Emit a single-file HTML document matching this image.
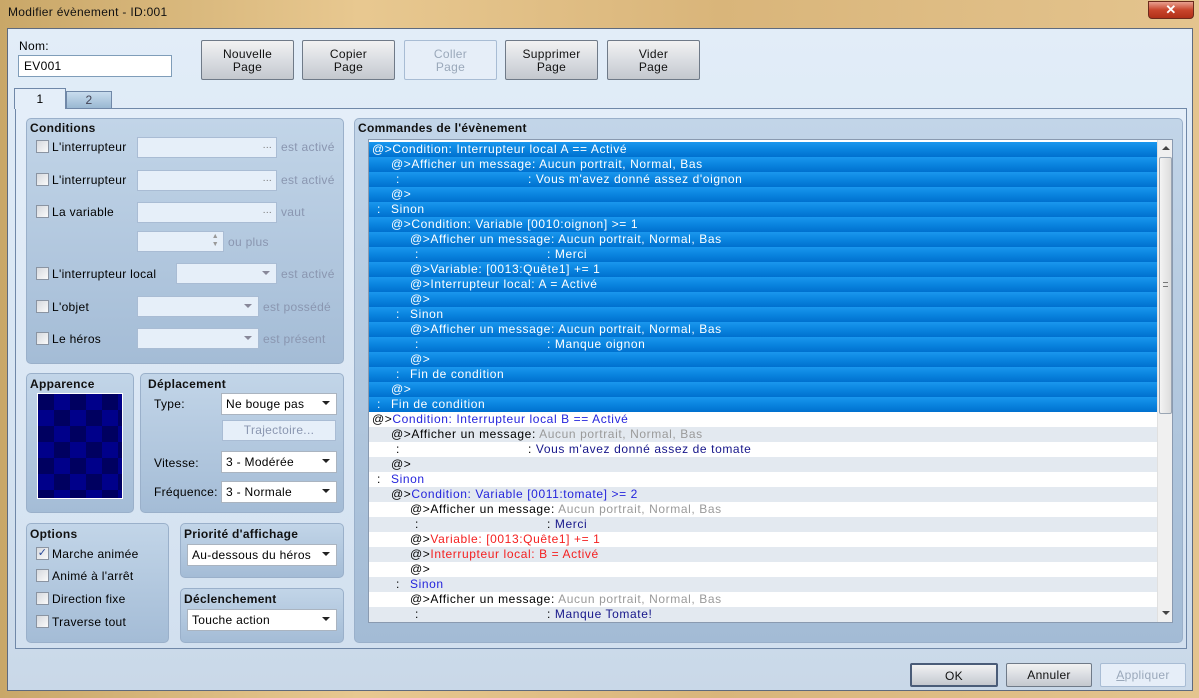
<!DOCTYPE html>
<html><head><meta charset="utf-8"><style>
*{box-sizing:border-box;margin:0;padding:0}
body{width:1199px;height:698px;overflow:hidden;position:relative;font-family:"Liberation Sans",sans-serif;font-size:12px;letter-spacing:0.3px;color:#000;background:linear-gradient(90deg,#c9a768,#e8c890 30%,#d9b57a 60%,#e4c48e);}
.a{position:absolute}
.title{left:8px;top:5px;font-size:12px;color:#111}
.close{left:1148px;top:1px;width:46px;height:18px;border:1px solid #6b2a1c;border-radius:0 0 4px 4px;background:linear-gradient(#e8a090,#c8452c 50%,#b03018);color:#fff;text-align:center;font-weight:bold;font-size:13px;line-height:16px}
.body{left:7px;top:28px;width:1186px;height:663px;border:1px solid #5e6a7e;background:linear-gradient(#e2edf8,#d6e4f2 60%,#c9d8e8)}
.btn{border:1px solid #6f7a88;border-radius:2px;background:linear-gradient(#f2f2f2,#dadde2 50%,#c4c8ce);text-align:center;font-size:12px;line-height:13px;color:#111}
.btn.dis{border-color:#a8bcd4;background:#e6eef8;color:#9aa8ba}
.inp{background:#fff;border:1px solid #7f9db9}
.panel{border:1px solid #9ab0ca;border-radius:5px;background:linear-gradient(#c2d5e8,#a4bcd6)}
.hd{font-weight:bold;font-size:12px;color:#111}
.cb{width:13px;height:13px;border:1px solid #8a94a2;background:linear-gradient(135deg,#d6d9de,#fafafa)}
.fld{border:1px solid #a9bcd4;background:#e6eff9}
.gray{color:#8a96b0}
.sel{background:#fff;border:1px solid #aab4c0}
.arr{position:absolute;right:6px;top:7px;width:0;height:0;border-left:4px solid transparent;border-right:4px solid transparent;border-top:4px solid #222}
.row{position:absolute;left:0;width:788px;height:15px;line-height:15px;white-space:nowrap;letter-spacing:0.6px}
.s{background:linear-gradient(#1a97ee,#0a84df 50%,#0070cf);color:#fff}
.w{background:#fff}
.g{background:#e3e9f0}
.row span{position:absolute;top:0}
.b{color:#2424dc}.n{color:#16168a}.r{color:#f42020}.gr{color:#9a9a9a}
i{font-style:normal}
</style></head><body>
<div class="a title">Modifier évènement - ID:001</div>
<div class="a close">✕</div>
<div class="a body"></div>

<div class="a" style="left:19px;top:39px">Nom:</div>
<div class="a inp" style="left:18px;top:55px;width:154px;height:22px;padding:3px 5px">EV001</div>
<div class="a btn" style="left:201px;top:40px;width:93px;height:40px;padding-top:7px">Nouvelle<br>Page</div>
<div class="a btn" style="left:302px;top:40px;width:93px;height:40px;padding-top:7px">Copier<br>Page</div>
<div class="a btn dis" style="left:404px;top:40px;width:93px;height:40px;padding-top:7px">Coller<br>Page</div>
<div class="a btn" style="left:505px;top:40px;width:93px;height:40px;padding-top:7px">Supprimer<br>Page</div>
<div class="a btn" style="left:607px;top:40px;width:93px;height:40px;padding-top:7px">Vider<br>Page</div>

<div class="a" style="left:15px;top:108px;width:1172px;height:541px;border:1px solid #7088a8;background:linear-gradient(#e4eef9,#d2e0ef)"></div>
<div class="a" style="left:14px;top:88px;width:52px;height:21px;border:1px solid #7088a8;border-bottom:none;background:#e4eef9;text-align:center;line-height:20px">1</div>
<div class="a" style="left:66px;top:91px;width:46px;height:17px;border:1px solid #7088a8;border-bottom:none;background:linear-gradient(#c8dcee,#9ab8d2);text-align:center;line-height:16px;color:#445">2</div>

<!-- Conditions -->
<div class="a panel" style="left:26px;top:118px;width:318px;height:246px"></div>
<div class="a hd" style="left:30px;top:121px">Conditions</div>
<div class="a cb" style="left:36px;top:140px"></div><div class="a" style="left:52px;top:140px">L'interrupteur</div>
<div class="a fld" style="left:137px;top:137px;width:140px;height:21px"><span style="position:absolute;right:4px;top:2px;color:#777;font-size:10px">...</span></div><div class="a gray" style="left:281px;top:140px">est activé</div>
<div class="a cb" style="left:36px;top:173px"></div><div class="a" style="left:52px;top:173px">L'interrupteur</div>
<div class="a fld" style="left:137px;top:170px;width:140px;height:21px"><span style="position:absolute;right:4px;top:2px;color:#777;font-size:10px">...</span></div><div class="a gray" style="left:281px;top:173px">est activé</div>
<div class="a cb" style="left:36px;top:205px"></div><div class="a" style="left:52px;top:205px">La variable</div>
<div class="a fld" style="left:137px;top:202px;width:140px;height:21px"><span style="position:absolute;right:4px;top:2px;color:#777;font-size:10px">...</span></div><div class="a gray" style="left:281px;top:205px">vaut</div>
<div class="a fld" style="left:137px;top:231px;width:87px;height:21px"><span style="position:absolute;right:4px;top:1px;color:#999;font-size:7px;line-height:8px">▲<br>▼</span></div><div class="a gray" style="left:228px;top:235px">ou plus</div>
<div class="a cb" style="left:36px;top:267px"></div><div class="a" style="left:52px;top:267px">L'interrupteur local</div>
<div class="a fld" style="left:176px;top:263px;width:101px;height:21px"><div class="arr" style="border-top-color:#889"></div></div><div class="a gray" style="left:281px;top:267px">est activé</div>
<div class="a cb" style="left:36px;top:300px"></div><div class="a" style="left:52px;top:300px">L'objet</div>
<div class="a fld" style="left:137px;top:296px;width:122px;height:21px"><div class="arr" style="border-top-color:#889"></div></div><div class="a gray" style="left:263px;top:300px">est possédé</div>
<div class="a cb" style="left:36px;top:332px"></div><div class="a" style="left:52px;top:332px">Le héros</div>
<div class="a fld" style="left:137px;top:328px;width:122px;height:21px"><div class="arr" style="border-top-color:#889"></div></div><div class="a gray" style="left:263px;top:332px">est présent</div>

<!-- Apparence -->
<div class="a panel" style="left:26px;top:373px;width:108px;height:140px"></div>
<div class="a hd" style="left:30px;top:377px">Apparence</div>
<div class="a" style="left:37px;top:393px;width:86px;height:106px;border:1px solid #fff;background-color:#000060;background-image:linear-gradient(45deg,#00008a 25%,transparent 25%,transparent 75%,#00008a 75%),linear-gradient(45deg,#00008a 25%,transparent 25%,transparent 75%,#00008a 75%);background-size:32px 32px;background-position:0 0,16px 16px"></div>

<!-- Deplacement -->
<div class="a panel" style="left:140px;top:373px;width:204px;height:140px"></div>
<div class="a hd" style="left:148px;top:377px">Déplacement</div>
<div class="a" style="left:154px;top:397px">Type:</div>
<div class="a sel" style="left:221px;top:393px;width:116px;height:22px;padding:3px 4px">Ne bouge pas<div class="arr"></div></div>
<div class="a fld" style="left:222px;top:420px;width:114px;height:21px;text-align:center;line-height:19px;color:#8a96b0">Trajectoire...</div>
<div class="a" style="left:154px;top:456px">Vitesse:</div>
<div class="a sel" style="left:221px;top:451px;width:116px;height:22px;padding:3px 4px">3 - Modérée<div class="arr"></div></div>
<div class="a" style="left:154px;top:485px">Fréquence:</div>
<div class="a sel" style="left:221px;top:481px;width:116px;height:22px;padding:3px 4px">3 - Normale<div class="arr"></div></div>

<!-- Options -->
<div class="a panel" style="left:26px;top:523px;width:143px;height:120px"></div>
<div class="a hd" style="left:30px;top:527px">Options</div>
<div class="a cb" style="left:36px;top:547px;color:#2a4a9a;font-size:11px;line-height:11px;text-align:center">✓</div><div class="a" style="left:52px;top:547px">Marche animée</div>
<div class="a cb" style="left:36px;top:569px"></div><div class="a" style="left:52px;top:569px">Animé à l'arrêt</div>
<div class="a cb" style="left:36px;top:592px"></div><div class="a" style="left:52px;top:592px">Direction fixe</div>
<div class="a cb" style="left:36px;top:615px"></div><div class="a" style="left:52px;top:615px">Traverse tout</div>

<div class="a panel" style="left:180px;top:523px;width:164px;height:55px"></div>
<div class="a hd" style="left:184px;top:527px">Priorité d'affichage</div>
<div class="a sel" style="left:187px;top:544px;width:150px;height:22px;padding:3px 4px">Au-dessous du héros<div class="arr"></div></div>
<div class="a panel" style="left:180px;top:588px;width:164px;height:55px"></div>
<div class="a hd" style="left:184px;top:592px">Déclenchement</div>
<div class="a sel" style="left:187px;top:609px;width:150px;height:22px;padding:3px 4px">Touche action<div class="arr"></div></div>

<!-- Commands -->
<div class="a panel" style="left:354px;top:118px;width:829px;height:525px;background:linear-gradient(#c2d5e8,#a3bbd5)"></div>
<div class="a hd" style="left:358px;top:121px">Commandes de l'évènement</div>
<div class="a" style="left:368px;top:139px;width:805px;height:484px;border:1px solid #8a9ab0;background:#fff;overflow:hidden">
<div class="a" style="left:0;top:2px;width:788px;height:480px">
<div class="row s" style="top:0"><span style="left:3px">@&gt;Condition: Interrupteur local A == Activé</span></div>
<div class="row s" style="top:15px"><span style="left:22px">@&gt;Afficher un message: Aucun portrait, Normal, Bas</span></div>
<div class="row s" style="top:30px"><span style="left:27px">:</span><span style="left:159px">: Vous m'avez donné assez d'oignon</span></div>
<div class="row s" style="top:45px"><span style="left:22px">@&gt;</span></div>
<div class="row s" style="top:60px"><span style="left:8px">:</span><span style="left:22px">Sinon</span></div>
<div class="row s" style="top:75px"><span style="left:22px">@&gt;Condition: Variable [0010:oignon] &gt;= 1</span></div>
<div class="row s" style="top:90px"><span style="left:41px">@&gt;Afficher un message: Aucun portrait, Normal, Bas</span></div>
<div class="row s" style="top:105px"><span style="left:46px">:</span><span style="left:178px">: Merci</span></div>
<div class="row s" style="top:120px"><span style="left:41px">@&gt;Variable: [0013:Quête1] += 1</span></div>
<div class="row s" style="top:135px"><span style="left:41px">@&gt;Interrupteur local: A = Activé</span></div>
<div class="row s" style="top:150px"><span style="left:41px">@&gt;</span></div>
<div class="row s" style="top:165px"><span style="left:27px">:</span><span style="left:41px">Sinon</span></div>
<div class="row s" style="top:180px"><span style="left:41px">@&gt;Afficher un message: Aucun portrait, Normal, Bas</span></div>
<div class="row s" style="top:195px"><span style="left:46px">:</span><span style="left:178px">: Manque oignon</span></div>
<div class="row s" style="top:210px"><span style="left:41px">@&gt;</span></div>
<div class="row s" style="top:225px"><span style="left:27px">:</span><span style="left:41px">Fin de condition</span></div>
<div class="row s" style="top:240px"><span style="left:22px">@&gt;</span></div>
<div class="row s" style="top:255px"><span style="left:8px">:</span><span style="left:22px">Fin de condition</span></div>
<div class="row w" style="top:270px"><span style="left:3px">@&gt;<i class="b">Condition: Interrupteur local B == Activé</i></span></div>
<div class="row g" style="top:285px"><span style="left:22px">@&gt;Afficher un message: <i class="gr">Aucun portrait, Normal, Bas</i></span></div>
<div class="row w" style="top:300px"><span style="left:27px">:</span><span style="left:159px">: <i class="n">Vous m'avez donné assez de tomate</i></span></div>
<div class="row g" style="top:315px"><span style="left:22px">@&gt;</span></div>
<div class="row w" style="top:330px"><span style="left:8px">:</span><span style="left:22px" class="b">Sinon</span></div>
<div class="row g" style="top:345px"><span style="left:22px">@&gt;<i class="b">Condition: Variable [0011:tomate] &gt;= 2</i></span></div>
<div class="row w" style="top:360px"><span style="left:41px">@&gt;Afficher un message: <i class="gr">Aucun portrait, Normal, Bas</i></span></div>
<div class="row g" style="top:375px"><span style="left:46px">:</span><span style="left:178px">: <i class="n">Merci</i></span></div>
<div class="row w" style="top:390px"><span style="left:41px">@&gt;<i class="r">Variable: [0013:Quête1] += 1</i></span></div>
<div class="row g" style="top:405px"><span style="left:41px">@&gt;<i class="r">Interrupteur local: B = Activé</i></span></div>
<div class="row w" style="top:420px"><span style="left:41px">@&gt;</span></div>
<div class="row g" style="top:435px"><span style="left:27px">:</span><span style="left:41px" class="b">Sinon</span></div>
<div class="row w" style="top:450px"><span style="left:41px">@&gt;Afficher un message: <i class="gr">Aucun portrait, Normal, Bas</i></span></div>
<div class="row g" style="top:465px"><span style="left:46px">:</span><span style="left:178px">: <i class="n">Manque Tomate!</i></span></div>
</div>
<div class="a" style="left:788px;top:0;width:16px;height:482px;background:#f0f0f0;border-left:1px solid #e0e0e0">
<div class="a" style="left:4px;top:6px;border-left:4px solid transparent;border-right:4px solid transparent;border-bottom:4px solid #444"></div>
<div class="a" style="left:1px;top:17px;width:13px;height:257px;border:1px solid #9aa6b4;border-radius:2px;background:linear-gradient(90deg,#f4f4f4,#dcdcdc)"><div style="position:absolute;left:3px;top:124px;width:5px;height:5px;border-top:1px solid #777;border-bottom:1px solid #777"></div></div>
<div class="a" style="left:4px;top:471px;border-left:4px solid transparent;border-right:4px solid transparent;border-top:4px solid #444"></div>
</div>
</div>

<div class="a btn" style="left:910px;top:663px;width:88px;height:24px;line-height:22px;border:2px solid #4a5c78">OK</div>
<div class="a btn" style="left:1006px;top:663px;width:86px;height:24px;line-height:22px">Annuler</div>
<div class="a btn dis" style="left:1100px;top:663px;width:86px;height:24px;line-height:22px"><u>A</u>ppliquer</div>
</body></html>
